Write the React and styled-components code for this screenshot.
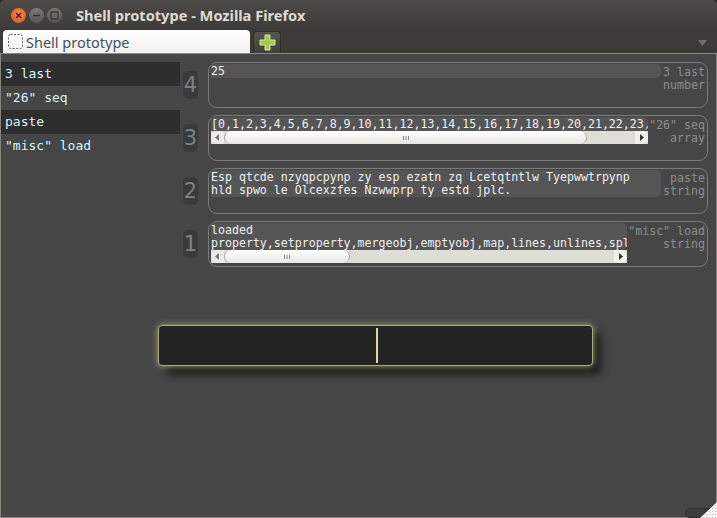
import React from 'react';
import styled, { createGlobalStyle } from 'styled-components';

const history = [
  { id: 4, label: ['3 last', 'number'], lines: ['25'] },
  { id: 3, label: ['"26" seq', 'array'], nowrap: true, thumb: 363, width: 437,
    lines: ['[0,1,2,3,4,5,6,7,8,9,10,11,12,13,14,15,16,17,18,19,20,21,22,23,'] },
  { id: 2, label: ['paste', 'string'],
    lines: ['Esp qtcde nzyqpcpynp zy esp ezatn zq Lcetqtntlw Tyepwwtrpynp', 'hld spwo le Olcexzfes Nzwwprp ty estd jplc.'] },
  { id: 1, label: ['"misc" load', 'string'], nowrap: true, thumb: 126, width: 416,
    lines: ['loaded', 'property,setproperty,mergeobj,emptyobj,map,lines,unlines,spl'] },
];

const sidebar = ['3 last', '"26" seq', 'paste', '"misc" load'];

function Scrollbar({ thumb }) {
  return (
    <Track>
      <ArrowButton>
        <svg width="5" height="7" viewBox="0 0 5 7"><path d="M4 0v7L0 3.5z" fill="#777" /></svg>
      </ArrowButton>
      <Thumb $width={thumb}>
        <svg width="6" height="4" viewBox="0 0 6 4"><path d="M.5 0v4M3 0v4M5.5 0v4" stroke="#888" /></svg>
      </Thumb>
      <Spacer />
      <ArrowButton $end>
        <svg width="5" height="7" viewBox="0 0 5 7"><path d="M1 0v7l4-3.5z" fill="#333" /></svg>
      </ArrowButton>
    </Track>
  );
}

function App() {
  return (
    <Window>
      <GlobalStyle />
      <TitleBar>
        <WindowButtons>
          <CloseButton>
            <svg width="7" height="7" viewBox="0 0 7 7"><path d="M1 1l5 5M6 1L1 6" stroke="#4a1a08" strokeWidth="1.3" /></svg>
          </CloseButton>
          <GreyButton>
            <svg width="9" height="3" viewBox="0 0 9 3"><path d="M1 1.5h7" stroke="#33322e" strokeWidth="1.5" /></svg>
          </GreyButton>
          <GreyButton>
            <svg width="9" height="9" viewBox="0 0 9 9"><rect x="1" y="1" width="7" height="7" fill="none" stroke="#33322e" strokeWidth="1.2" /></svg>
          </GreyButton>
        </WindowButtons>
        <Title>Shell prototype - Mozilla Firefox</Title>
      </TitleBar>

      <TabStrip>
        <Tab>
          <svg width="15" height="15" viewBox="0 0 15 15">
            <rect x="0.5" y="0.5" width="14" height="14" rx="2" fill="none" stroke="#666" strokeDasharray="2 1.5" />
          </svg>
          Shell prototype
        </Tab>
        <NewTab>
          <svg width="17" height="17" viewBox="0 0 17 17">
            <path d="M6 1h5v5h5v5h-5v5H6v-5H1V6h5z" fill="#a5c94f" stroke="#dbe8a8" strokeWidth="1" />
          </svg>
        </NewTab>
        <TabMenu>
          <svg width="9" height="6" viewBox="0 0 9 6"><path d="M0 0h9L4.5 6z" fill="#6f6e6a" /></svg>
        </TabMenu>
      </TabStrip>

      <Main>
        <Panels>
          <CommandList>
            {sidebar.map((name, i) => (
              <Command key={name} $dark={i % 2 === 0}>{name}</Command>
            ))}
          </CommandList>
          <Results>
            {history.map((item) => (
              <Result key={item.id}>
                <Badge>{item.id}</Badge>
                <Card>
                  <Output>
                    <OutputText $width={item.width} $nowrap={item.nowrap}>
                      {item.lines.map((line) => <div key={line}>{line}</div>)}
                    </OutputText>
                    {item.thumb && <ScrollWrap $width={item.width}><Scrollbar thumb={item.thumb} /></ScrollWrap>}
                  </Output>
                  <TypeLabel>
                    {item.label.map((line) => <div key={line}>{line}</div>)}
                  </TypeLabel>
                </Card>
              </Result>
            ))}
          </Results>
        </Panels>
        <Prompt><Caret /></Prompt>
        <ResizeCorner>
          <svg width="32" height="16" viewBox="0 0 32 16">
            <defs>
              <pattern id="dots" width="3" height="3" patternUnits="userSpaceOnUse">
                <rect width="3" height="3" fill="#f4f2ee" />
                <rect width="1" height="1" fill="#c9c6c0" />
              </pattern>
            </defs>
            <rect x="0.5" y="6.5" width="28" height="9" rx="4.5" fill="#3c3c3c" stroke="#2c2c2c" />
            <path d="M32 0v16H15z" fill="url(#dots)" />
          </svg>
        </ResizeCorner>
      </Main>
    </Window>
  );
}

export default App;

const GlobalStyle = createGlobalStyle`
  html, body {
    margin: 0;
    padding: 0;
    background: #2a2926;
  }
`;

const Window = styled.div`
  width: 717px;
  height: 518px;
  display: flex;
  flex-direction: column;
  overflow: hidden;
  background: #3c3b37;
  border-radius: 5px 5px 0 0;
  font-family: "Noto Sans", sans-serif;
`;

const TitleBar = styled.div`
  height: 30px;
  display: flex;
  align-items: center;
  padding-left: 11px;
  background: linear-gradient(#4c4b47, #3c3b37);
`;

const WindowButtons = styled.div`
  display: flex;
  gap: 3px;
`;

const CircleButton = styled.div`
  width: 15px;
  height: 15px;
  border-radius: 50%;
  display: flex;
  align-items: center;
  justify-content: center;
`;

const CloseButton = styled(CircleButton)`
  background: radial-gradient(circle at 50% 40%, #f58a4e, #e04f14);
`;

const GreyButton = styled(CircleButton)`
  background: linear-gradient(#7b7a75, #55544f);
`;

const Title = styled.div`
  margin-left: 14px;
  font-weight: 700;
  font-size: 14.6px;
  color: #dfdbd2;
`;

const TabStrip = styled.div`
  height: 23px;
  display: flex;
  align-items: flex-end;
  padding-left: 3px;
  background: #3c3b37;
  border-bottom: 1px solid #8c8b85;
`;

const Tab = styled.div`
  width: 247px;
  height: 23px;
  box-sizing: border-box;
  display: flex;
  align-items: center;
  gap: 3px;
  padding-left: 5px;
  background: linear-gradient(#ffffff, #f2f1ef);
  border-radius: 4px 4px 0 0;
  font-size: 14.5px;
  color: #46505a;
`;

const NewTab = styled.div`
  width: 28px;
  height: 22px;
  margin-left: 3px;
  box-sizing: border-box;
  display: flex;
  align-items: center;
  justify-content: center;
  background: linear-gradient(#55544f, #403f3b);
  border: 1px solid #2f2e2b;
  border-bottom: 0;
  border-radius: 4px 4px 0 0;
`;

const TabMenu = styled.div`
  margin-left: auto;
  align-self: center;
  padding-right: 10px;
  line-height: 0;
  position: relative;
  top: 1px;
`;

const Main = styled.div`
  position: relative;
  flex: 1;
  display: flex;
  flex-direction: column;
  background: #464646;
  border: 1px solid #85847e;
  border-top: 0;
  font-family: "DejaVu Sans Mono", monospace;
`;

const Panels = styled.div`
  display: flex;
  padding: 8px 8px 0 0;
`;

const CommandList = styled.div`
  width: 179px;
  flex-shrink: 0;
`;

const Command = styled.div`
  height: 24px;
  line-height: 24px;
  padding-left: 4px;
  font-size: 13px;
  color: #dcf2f6;
  background: ${({ $dark }) => ($dark ? '#2e2e2e' : 'transparent')};
`;

const Results = styled.div`
  flex: 1;
  display: flex;
  flex-direction: column;
  gap: 7px;
  padding-left: 3px;
`;

const Result = styled.div`
  height: 46px;
  display: flex;
  align-items: center;
  gap: 10px;
`;

const Badge = styled.div`
  width: 15px;
  height: 28px;
  flex-shrink: 0;
  display: flex;
  align-items: center;
  justify-content: center;
  background: #3a3a3a;
  border-radius: 5px;
  font-family: "DejaVu Sans", sans-serif;
  font-size: 21px;
  color: #7b8288;
`;

const Card = styled.div`
  flex: 1;
  min-width: 0;
  height: 46px;
  box-sizing: border-box;
  display: flex;
  align-items: flex-start;
  justify-content: space-between;
  padding: 1px 2px 0 2px;
  border: 1px solid #7a7a7a;
  border-radius: 9px;
`;

const Output = styled.div`
  display: flex;
  flex-direction: column;
`;

const OutputText = styled.div`
  width: ${({ $width }) => ($width ? `${$width}px` : '450px')};
  box-sizing: border-box;
  padding-top: 1px;
  font-size: 11.6px;
  line-height: 13px;
  color: #f0f0f0;
  background: #555555;
  border-radius: 0 5px 5px 0;
  white-space: ${({ $nowrap }) => ($nowrap ? 'nowrap' : 'normal')};
  overflow: hidden;
`;

const ScrollWrap = styled.div`
  width: ${({ $width }) => $width}px;
`;

const Track = styled.div`
  height: 13px;
  display: flex;
  align-items: stretch;
  background: #dfddd8;
`;

const ArrowButton = styled.div`
  width: 13px;
  display: flex;
  align-items: center;
  justify-content: center;
  background: ${({ $end }) => ($end ? '#f1f0ec' : '#eceae6')};
  border-radius: ${({ $end }) => ($end ? '0 6px 6px 0' : '6px 0 0 6px')};
`;

const Thumb = styled.div`
  width: ${({ $width }) => $width}px;
  display: flex;
  align-items: center;
  justify-content: center;
  box-sizing: border-box;
  background: linear-gradient(#ffffff, #e9e7e3);
  border: 1px solid #a8a6a1;
  border-width: 0 1px;
  border-radius: 7px;
`;

const Spacer = styled.div`
  flex: 1;
`;

const TypeLabel = styled.div`
  padding-top: 2px;
  font-size: 11.6px;
  line-height: 13px;
  text-align: right;
  color: #8c8c8c;
  white-space: nowrap;
`;

const Prompt = styled.div`
  width: 435px;
  height: 41px;
  margin: 58px 0 0 157px;
  box-sizing: border-box;
  display: flex;
  justify-content: center;
  padding: 2px 0 2px 3px;
  background: #232323;
  border: 1px solid #a9a97f;
  border-radius: 4px;
  box-shadow: 0 0 6px #a9a97f, 8px 8px 8px #1a1a1a;
`;

const Caret = styled.div`
  width: 2px;
  background: #d8d89c;
`;

const ResizeCorner = styled.div`
  position: absolute;
  right: -1px;
  bottom: -1px;
  line-height: 0;
`;
